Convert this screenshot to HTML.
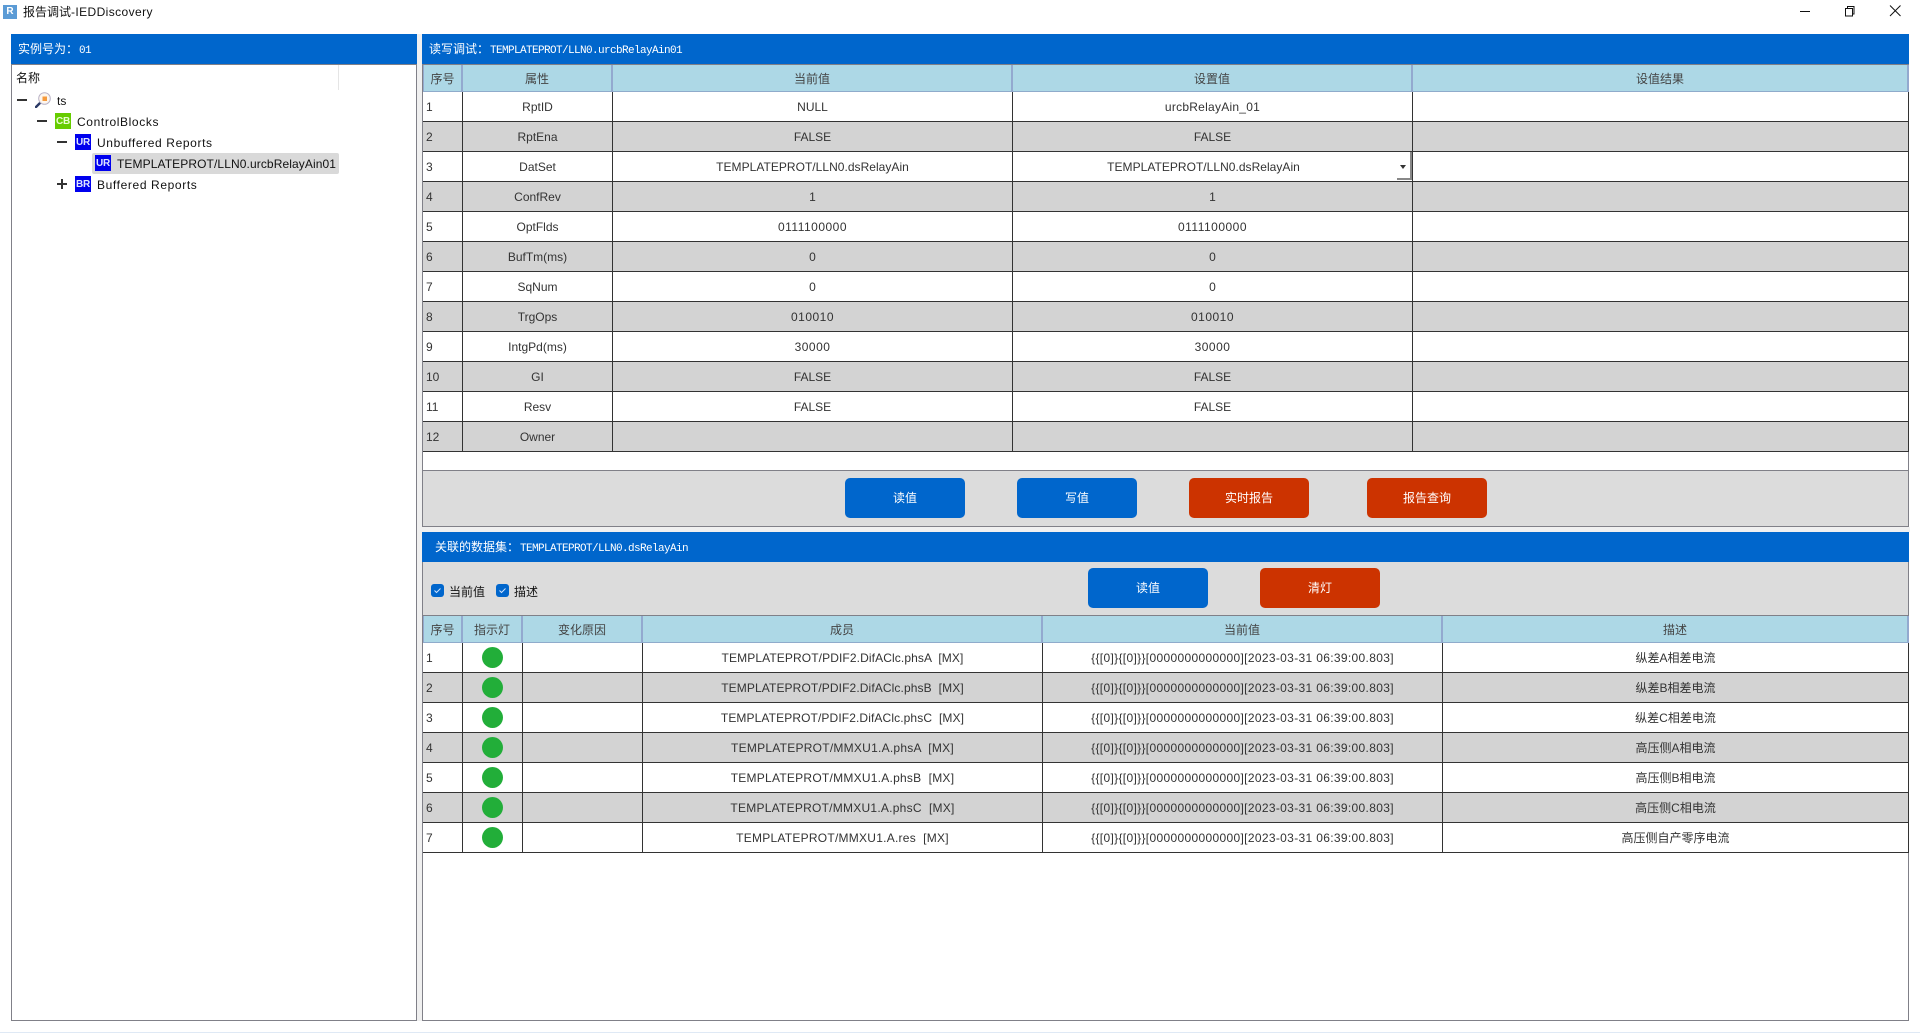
<!DOCTYPE html>
<html lang="zh-CN">
<head>
<meta charset="utf-8">
<title>报告调试-IEDDiscovery</title>
<style>
*{box-sizing:border-box}
html,body{margin:0;padding:0;width:1920px;height:1033px;overflow:hidden;background:#fff;}
body{position:relative;font:12px "Liberation Sans","Noto Sans CJK SC",sans-serif;color:#333}
.a{position:absolute}
.blue{background:#0066cc;color:#fff;line-height:30px;white-space:pre}
.m{font-family:"Liberation Mono","Noto Sans CJK SC",monospace;font-size:11px;letter-spacing:-.6px}
.btn{position:absolute;height:40px;width:120px;border-radius:5px;color:#fff;text-align:center;line-height:40px;background:#0066cc}
.red{background:#cc3300}
table{position:absolute;left:423px;border-collapse:separate;border-spacing:0;table-layout:fixed}
td{height:30px;padding:0;border-right:1px solid #333;border-bottom:1px solid #333;text-align:center;white-space:pre;overflow:hidden;line-height:28px;background:#fff}
td:first-child{text-align:left;padding-left:3px}
tr.g td{background:#d3d3d3}
th{font-weight:normal;height:27px;padding:2px 0 0;background:#add8e6;border-right:2px solid #93a9cf;border-bottom:1px solid #8fabcb;text-align:center;line-height:24px;color:#444}
th:first-child{border-left:1px solid #93a9cf}
.dot{display:block;width:21px;height:21px;border-radius:50%;background:#22ae39;margin:0 auto}
.t{position:absolute;color:#111;white-space:pre;line-height:16px}
.ls{letter-spacing:.62px}
.ic{position:absolute;width:16px;height:16px;background:#0000ee;color:#dfe6ff;font:bold 10px/18px "Liberation Sans",sans-serif;text-align:center;letter-spacing:-.2px;overflow:hidden}
.h{position:absolute;width:10px;height:2px;background:#333}
.cb{position:absolute;top:584px;width:13px;height:13px;border-radius:3px;background:#0066cc}
.n{letter-spacing:.5px}
.v{letter-spacing:.33px}
.p{letter-spacing:.11px}
.d{letter-spacing:.03px}
.q{letter-spacing:.25px}
</style>
</head>
<body>
<!-- title bar -->
<div class="a" style="left:3px;top:5px;width:14px;height:14px;background:#5b9bd5;color:#fff;font:bold 10px/14px 'Liberation Sans',sans-serif;text-align:center">R</div>
<div class="a" style="left:23px;top:4px;color:#111;line-height:16px;font-size:12px">报告调试<span style="letter-spacing:.4px">-IEDDiscovery</span></div>
<svg class="a" style="left:1794px;top:0" width="115" height="22" viewBox="0 0 115 22" fill="none" stroke="#111" stroke-width="1">
<path d="M6 11.5H16"/>
<path d="M51.5 8.5h7v7.5h-7z"/><path d="M53.5 8V6.5h6.5v7.500h-1.500"/>
<path d="M96 5.500L106.500 16M106.500 5.500L96 16"/>
</svg>

<!-- gaps -->
<div class="a" style="left:417px;top:34px;width:5px;height:987px;background:#f0f0f0"></div>

<!-- left panel -->
<div class="a" style="left:11px;top:64px;width:406px;height:957px;background:#fff;border:1px solid #808088"></div>
<div class="a blue" style="left:11px;top:34px;width:406px;height:30px;padding-left:7px">实例号为：<span class="m" style="margin-left:1px">01</span></div>
<div class="a" style="left:338px;top:65px;width:1px;height:25px;background:#e5e5e5"></div>
<div class="t" style="left:16px;top:70px">名称</div>

<div class="h" style="left:17px;top:99px"></div>
<svg class="a" style="left:35px;top:92px" width="17" height="16" viewBox="0 0 17 16">
<path d="M1 15L6 10" stroke="#2b3a66" stroke-width="2.400" stroke-linecap="round"/>
<circle cx="9.500" cy="6.500" r="5.800" fill="#fdf6ee" stroke="#b9b2c6" stroke-width="1"/>
<rect x="7.500" y="4.500" width="4.500" height="4.500" fill="#f59a3c"/>
</svg>
<div class="t" style="left:57px;top:93px">ts</div>

<div class="h" style="left:37px;top:120px"></div>
<div class="ic" style="left:55px;top:113px;background:#66cc00;color:#e8ffd0">CB</div>
<div class="t ls" style="left:77px;top:114px">ControlBlocks</div>

<div class="h" style="left:57px;top:141px"></div>
<div class="ic" style="left:75px;top:134px">UR</div>
<div class="t ls" style="left:97px;top:135px">Unbuffered Reports</div>

<div class="a" style="left:92px;top:153px;width:247px;height:21px;background:#d9d9d9;border-radius:2px"></div>
<div class="ic" style="left:95px;top:155px">UR</div>
<div class="t" style="left:117px;top:156px;letter-spacing:.1px">TEMPLATEPROT/LLN0.urcbRelayAin01</div>

<div class="h" style="left:57px;top:183px"></div>
<div class="a" style="left:61px;top:179px;width:2px;height:10px;background:#333"></div>
<div class="ic" style="left:75px;top:176px">BR</div>
<div class="t ls" style="left:97px;top:177px">Buffered Reports</div>

<!-- right upper -->
<div class="a" style="left:422px;top:64px;width:1487px;height:463px;background:#dcdcdc;border:1px solid #808088"></div>
<div class="a" style="left:423px;top:65px;width:1485px;height:406px;background:#fff;border-bottom:1px solid #808088"></div>
<div class="a blue" style="left:422px;top:34px;width:1487px;height:30px;padding-left:7px">读写调试：<span class="m" style="margin-left:1px">TEMPLATEPROT/LLN0.urcbRelayAin01</span></div>

<table style="top:65px;width:1486px">
<colgroup><col style="width:40px"><col style="width:150px"><col style="width:400px"><col style="width:400px"><col style="width:496px"></colgroup>
<tr><th>序号</th><th>属性</th><th>当前值</th><th>设置值</th><th>设值结果</th></tr>
<tr><td>1</td><td>RptID</td><td>NULL</td><td class="q">urcbRelayAin_01</td><td></td></tr>
<tr class="g"><td>2</td><td>RptEna</td><td>FALSE</td><td>FALSE</td><td></td></tr>
<tr><td>3</td><td>DatSet</td><td class="d">TEMPLATEPROT/LLN0.dsRelayAin</td><td class="d" style="padding-right:18px">TEMPLATEPROT/LLN0.dsRelayAin</td><td></td></tr>
<tr class="g"><td>4</td><td>ConfRev</td><td>1</td><td>1</td><td></td></tr>
<tr><td>5</td><td>OptFlds</td><td class="n">0111100000</td><td class="n">0111100000</td><td></td></tr>
<tr class="g"><td>6</td><td>BufTm(ms)</td><td>0</td><td>0</td><td></td></tr>
<tr><td>7</td><td>SqNum</td><td>0</td><td>0</td><td></td></tr>
<tr class="g"><td>8</td><td>TrgOps</td><td class="n">010010</td><td class="n">010010</td><td></td></tr>
<tr><td>9</td><td>IntgPd(ms)</td><td class="n">30000</td><td class="n">30000</td><td></td></tr>
<tr class="g"><td>10</td><td>GI</td><td>FALSE</td><td>FALSE</td><td></td></tr>
<tr><td>11</td><td>Resv</td><td>FALSE</td><td>FALSE</td><td></td></tr>
<tr class="g"><td>12</td><td>Owner</td><td></td><td></td><td></td></tr>
</table>

<!-- dropdown corner -->
<div class="a" style="left:1400px;top:165px;width:0;height:0;border-left:3.500px solid transparent;border-right:3.500px solid transparent;border-top:4px solid #333"></div>
<div class="a" style="left:1410px;top:152px;width:2px;height:28px;background:#888"></div>
<div class="a" style="left:1397px;top:178px;width:15px;height:2px;background:#888"></div>

<div class="btn" style="left:845px;top:478px">读值</div>
<div class="btn" style="left:1017px;top:478px">写值</div>
<div class="btn red" style="left:1189px;top:478px">实时报告</div>
<div class="btn red" style="left:1367px;top:478px">报告查询</div>

<!-- gap between panels -->
<div class="a" style="left:422px;top:527px;width:1488px;height:5px;background:#f0f0f0"></div>

<!-- right lower -->
<div class="a" style="left:422px;top:562px;width:1487px;height:459px;background:#fff;border:1px solid #808088;border-top:0"></div>
<div class="a" style="left:423px;top:562px;width:1485px;height:54px;background:#dcdcdc;border-bottom:1px solid #808088"></div>
<div class="a blue" style="left:422px;top:532px;width:1487px;height:30px;padding-left:13px">关联的数据集：<span class="m" style="margin-left:1px">TEMPLATEPROT/LLN0.dsRelayAin</span></div>

<div class="cb" style="left:431px"></div>
<svg class="a" style="left:431px;top:584px" width="13" height="13" viewBox="0 0 13 13" fill="none" stroke="#cfe3ff" stroke-width="1"><path d="M3.500 6.500L5.500 8.500L9.500 4.500"/></svg>
<div class="t" style="left:449px;top:584px;font-size:12px">当前值</div>
<div class="cb" style="left:496px"></div>
<svg class="a" style="left:496px;top:584px" width="13" height="13" viewBox="0 0 13 13" fill="none" stroke="#cfe3ff" stroke-width="1"><path d="M3.500 6.500L5.500 8.500L9.500 4.500"/></svg>
<div class="t" style="left:514px;top:584px;font-size:12px">描述</div>

<div class="btn" style="left:1088px;top:568px">读值</div>
<div class="btn red" style="left:1260px;top:568px">清灯</div>

<table style="top:616px;width:1486px">
<colgroup><col style="width:40px"><col style="width:60px"><col style="width:120px"><col style="width:400px"><col style="width:400px"><col style="width:466px"></colgroup>
<tr><th>序号</th><th>指示灯</th><th>变化原因</th><th>成员</th><th>当前值</th><th>描述</th></tr>
<tr><td>1</td><td><i class="dot"></i></td><td></td><td class="p">TEMPLATEPROT/PDIF2.DifAClc.phsA  [MX]</td><td class="v">{{[0]}{[0]}}[0000000000000][2023-03-31 06:39:00.803]</td><td>纵差A相差电流</td></tr>
<tr class="g"><td>2</td><td><i class="dot"></i></td><td></td><td class="p">TEMPLATEPROT/PDIF2.DifAClc.phsB  [MX]</td><td class="v">{{[0]}{[0]}}[0000000000000][2023-03-31 06:39:00.803]</td><td>纵差B相差电流</td></tr>
<tr><td>3</td><td><i class="dot"></i></td><td></td><td class="p">TEMPLATEPROT/PDIF2.DifAClc.phsC  [MX]</td><td class="v">{{[0]}{[0]}}[0000000000000][2023-03-31 06:39:00.803]</td><td>纵差C相差电流</td></tr>
<tr class="g"><td>4</td><td><i class="dot"></i></td><td></td><td class="q">TEMPLATEPROT/MMXU1.A.phsA  [MX]</td><td class="v">{{[0]}{[0]}}[0000000000000][2023-03-31 06:39:00.803]</td><td>高压侧A相电流</td></tr>
<tr><td>5</td><td><i class="dot"></i></td><td></td><td class="q">TEMPLATEPROT/MMXU1.A.phsB  [MX]</td><td class="v">{{[0]}{[0]}}[0000000000000][2023-03-31 06:39:00.803]</td><td>高压侧B相电流</td></tr>
<tr class="g"><td>6</td><td><i class="dot"></i></td><td></td><td class="q">TEMPLATEPROT/MMXU1.A.phsC  [MX]</td><td class="v">{{[0]}{[0]}}[0000000000000][2023-03-31 06:39:00.803]</td><td>高压侧C相电流</td></tr>
<tr><td>7</td><td><i class="dot"></i></td><td></td><td class="q">TEMPLATEPROT/MMXU1.A.res  [MX]</td><td class="v">{{[0]}{[0]}}[0000000000000][2023-03-31 06:39:00.803]</td><td>高压侧自产零序电流</td></tr>
</table>

<!-- bottom strip -->
<div class="a" style="left:0;top:1032px;width:1920px;height:1px;background:#dfe9f5"></div>
</body>
</html>
